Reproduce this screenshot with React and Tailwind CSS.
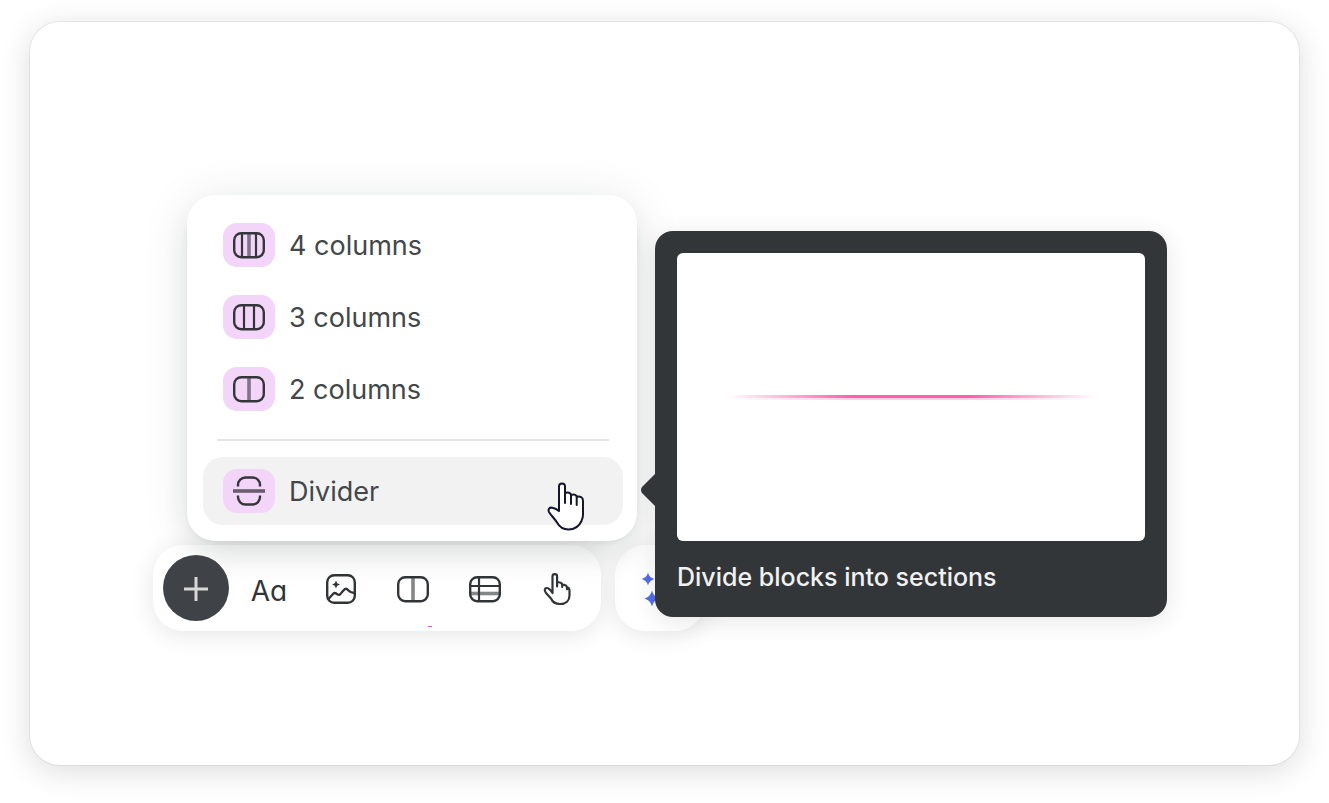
const COLUMN_ITEMS = [
  { label: '4 columns', lines: [10, 17, 24] },
  { label: '3 columns', lines: [12, 22] },
  { label: '2 columns', lines: [17] },
]

function Icon({ children, size = 34 }) {
  return (
    <svg
      width={size}
      height={size}
      viewBox="0 0 34 34"
      fill="none"
      stroke="currentColor"
      strokeWidth="2.4"
      strokeLinejoin="round"
      aria-hidden="true"
    >
      {children}
    </svg>
  )
}

function ColumnsIcon({ lines }) {
  return (
    <Icon>
      <rect x="2.2" y="5.2" width="29.6" height="24" rx="7" />
      {lines.map(x => (
        <path
          key={x}
          d={`M${x} 6v23`}
          strokeWidth={x === 17 ? 3.6 : 2.2}
          strokeOpacity={x === 17 ? 0.6 : 1}
        />
      ))}
    </Icon>
  )
}

function DividerIcon() {
  return (
    <Icon>
      <path d="M1 17h32" strokeWidth="3.6" stroke="#665e6c" />
      <path d="M6 12.5V11a7.5 7.5 0 0 1 7.5-7.5h7A7.5 7.5 0 0 1 28 11v1.500" />
      <path d="M6 21.5V23a7.5 7.5 0 0 0 7.5 7.5h7A7.5 7.5 0 0 0 28 23v-1.500" />
    </Icon>
  )
}

function ImageIcon() {
  return (
    <Icon>
      <rect x="3.2" y="3.2" width="27.6" height="27.6" rx="7" />
      <path d="M4 27.500l5-5.500c1-1 2-1.200 3-.6 1.500.9 2.500 1.800 3.500 1.300 2-1.300 3.500-4.500 5.500-5.700 1.300-.8 2.500.3 3.500 1.500 1.500 1.700 2.500 2.300 6 2.500" />
      <path d="M12 8.500l1.200 2.800 2.800 1.200-2.800 1.200-1.200 2.800-1.200-2.800L8 12.500l2.800-1.200z" fill="currentColor" stroke="none" />
    </Icon>
  )
}

function TableIcon() {
  return (
    <Icon>
      <rect x="2.2" y="5.2" width="29.6" height="24" rx="7" />
      <path d="M2 14h30M11 6v23" strokeWidth="2.2" />
      <path d="M2 21.500h30" strokeWidth="3.6" strokeOpacity="0.6" />
    </Icon>
  )
}

function TapIcon() {
  return (
    <svg width="28" height="34" viewBox="0 0 28 34" fill="none" stroke="currentColor" strokeWidth="2.2" strokeLinejoin="round" strokeLinecap="round" aria-hidden="true">
      <path d="M9.5 21V4.500a2.300 2.300 0 0 1 4.600 0V10l2.900.5c1.300.3 2 1 2.200 2l2.300.3c1.500.3 2.300 1.200 2.500 2.500 1.700.3 2.500 1.500 2.500 3.200v5c0 5-3.500 8.500-9.500 8.500-4.500 0-7.500-2-9-5.500l-5-5.500c-2-2.500-1.500-5 .8-5 2 0 3.700 2 5.700 5z" />
      <path d="M14.100 10v4.500M19.200 12.500v2.500M24 15.300v2" />
    </svg>
  )
}

function HandCursor() {
  return (
    <svg width="38" height="50" viewBox="0 0 38 50" fill="#fff" stroke="#15152e" strokeWidth="2" strokeLinejoin="round" strokeLinecap="round" aria-hidden="true">
      <path d="M12 29V4.500a3 3 0 0 1 6 0V11c3-.8 5.500-.5 6 2 2.500-.8 5-.5 5.700 1.500 4-.5 6.300 1 6.300 4.500V33c0 2-.7 4-1.500 6C32 44.500 27.500 47.500 21.500 47.500 16 47.500 12.500 45 10 40.500 8 37 4 33.500 2 30c-1.300-2.700.5-5 3.500-4.200 2.500.6 4.500 1.500 6.500 3.200z" />
      <path d="M18 11v10M24 13v9M29.700 14.500V23" />
    </svg>
  )
}

function MenuItem({ label, active, children }) {
  return (
    <button
      type="button"
      role="menuitem"
      className={`flex h-[68px] w-full items-center gap-[14px] rounded-[20px] px-5 text-left text-[27px] text-[#43474a] ${active ? 'bg-[#f2f2f2]' : ''}`}
    >
      <span className="flex h-11 w-[52px] items-center justify-center rounded-[14px] bg-[#f2d5f8] text-[#34363a]">
        {children}
      </span>
      <span className="pt-[2px]">{label}</span>
    </button>
  )
}

function ToolButton({ label, children }) {
  return (
    <button type="button" aria-label={label} className="flex h-[66px] w-[72px] items-center justify-center pt-[2px] text-[#323538]">
      {children}
    </button>
  )
}

function Tooltip() {
  return (
    <div
      role="tooltip"
      className="absolute top-9 left-[468px] z-20 w-[512px] rounded-[18px] bg-[#323639] p-[22px] pb-6 text-[#f1f1f1] shadow-[0_4px_24px_rgba(0,0,0,0.1)]"
    >
      <svg className="absolute top-[242px] -left-[15px]" width="16" height="34" viewBox="0 0 16 34" aria-hidden="true">
        <path d="M16 0L2 14Q0 17 2 20L16 34z" fill="#323639" />
      </svg>
      <div className="flex h-72 items-center rounded-[6px] bg-white px-[50px]">
        <div className="w-full bg-[linear-gradient(90deg,transparent,#ff5fa6_34%,#ff5fa6_66%,transparent)] pt-[3px]">
          <div className="h-[2px] bg-white/70" />
        </div>
      </div>
      <p className="mt-5 text-[25px] leading-8 font-medium">Divide blocks into sections</p>
    </div>
  )
}

export default function App() {
  return (
    <div className="flex min-h-screen bg-white px-[30px] pt-[22px] pb-[38px] font-['Inter','Liberation_Sans',sans-serif]">
      <main className="flex-1 rounded-[30px] bg-white pt-[173px] pl-[123px] shadow-[0_0_0_1px_rgba(0,0,0,0.06),0_6px_32px_rgba(0,0,0,0.14)]">
        <div className="relative z-10 ml-[34px] w-[450px]">
          <div
            role="menu"
            className="rounded-[28px] bg-white py-4 pr-[14px] pl-4 shadow-[0_2px_4px_rgba(0,0,0,0.04),0_14px_32px_-8px_rgba(20,30,30,0.14),0_4px_50px_rgba(20,30,30,0.09)]"
          >
            <div className="flex flex-col gap-1">
              {COLUMN_ITEMS.map(item => (
                <MenuItem key={item.label} label={item.label}>
                  <ColumnsIcon lines={item.lines} />
                </MenuItem>
              ))}
            </div>
            <hr className="mx-[14px] my-4 border-t-2 border-[#e6e6e6]" />
            <div className="relative">
              <MenuItem label="Divider" active>
                <DividerIcon />
              </MenuItem>
              <div className="pointer-events-none absolute top-[25px] right-[38px]">
                <HandCursor />
              </div>
            </div>
          </div>
          <Tooltip />
        </div>

        <div className="mt-1 flex gap-[14px]">
          <div role="toolbar" className="relative flex items-center rounded-[30px] bg-white py-[10px] pr-2 pl-[10px] shadow-[0_4px_24px_rgba(0,0,0,0.1)]">
            <button type="button" aria-label="Add" className="relative z-10 mr-1 flex size-[66px] items-center justify-center rounded-full bg-[#3f4347] pt-[2px] text-[#d8d8d8]">
              <svg width="26" height="26" viewBox="0 0 26 26" stroke="currentColor" strokeWidth="3" aria-hidden="true">
                <path d="M13 1v24M1 13h24" />
              </svg>
            </button>
            <ToolButton label="Text">
              <span className="pt-1 text-[28px] [font-feature-settings:'cv11']">Aa</span>
            </ToolButton>
            <ToolButton label="Image">
              <ImageIcon />
            </ToolButton>
            <ToolButton label="Columns">
              <ColumnsIcon lines={[17]} />
            </ToolButton>
            <ToolButton label="Table">
              <TableIcon />
            </ToolButton>
            <ToolButton label="Interactive">
              <TapIcon />
            </ToolButton>
            <span className="absolute bottom-1 left-[275px] h-px w-1 bg-[#e05bd0]" />
          </div>
          <button
            type="button"
            aria-label="Generate"
            className="flex w-[90px] items-center rounded-[30px] bg-white pl-[26px] text-[#526ee8] shadow-[0_4px_24px_rgba(0,0,0,0.1)]"
          >
            <svg width="36" height="36" viewBox="0 0 36 36" fill="currentColor" aria-hidden="true">
              <path d="M7 2.500q1 5 6.500 6.500-5.500 1.500-6.500 6.500-1-5-6.500-6.500Q6 7.500 7 2.500zM11 20.500q1.300 6 7.500 8-6.200 2-7.500 8-1.300-6-7.500-8 6.200-2 7.500-8zM24 4q2 8.500 10 11-8 2.500-10 11-2-8.500-10-11 8-2.500 10-11z" />
            </svg>
          </button>
        </div>
      </main>
    </div>
  )
}
